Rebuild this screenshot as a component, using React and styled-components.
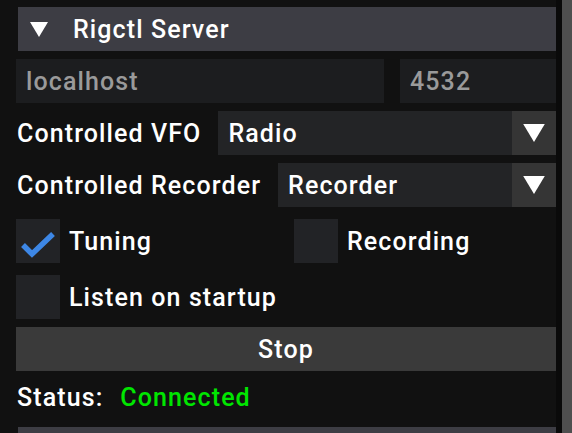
import React from 'react';
import styled, { createGlobalStyle } from 'styled-components';

const GlobalStyle = createGlobalStyle`
  html, body {
    margin: 0;
    padding: 0;
    background: #111111;
    overflow: hidden;
  }
  body {
    font-family: Roboto, "Liberation Sans", sans-serif;
    font-size: 25px;
    font-weight: 500;
    letter-spacing: 1.1px;
    color: #ffffff;
  }
`;

const Window = styled.div`
  display: flex;
  width: 572px;
  height: 433px;
  overflow: hidden;
`;

const Panel = styled.div`
  flex: 1;
  display: flex;
  flex-direction: column;
  gap: 8px;
  padding: 7px 0 0 16px;
  min-width: 0;

  & > * {
    flex-shrink: 0;
  }
`;

const Gutter = styled.div`
  width: 6px;
  background: #0a0a0a;
`;

const Scrollbar = styled.div`
  width: 10px;
  background: #4f4f4f;
`;

const Header = styled.div`
  display: flex;
  align-items: center;
  height: 44px;
  margin-left: 2px;
  padding-left: 12px;
  gap: 25px;
  background: #3d3d44;
`;

const Frame = styled.div`
  display: flex;
  align-items: center;
  height: 44px;
  padding-left: 10px;
  background: #1c1d1f;
  color: ${({ $muted }) => ($muted ? '#9a9a9a' : '#ffffff')};
  white-space: nowrap;
`;

const InputRow = styled.div`
  display: grid;
  grid-template-columns: 1fr 156px;
  gap: 16px;
`;

const FieldRow = styled.div`
  display: flex;
  align-items: center;
  gap: 17px;
`;

const Label = styled.span`
  padding-left: 1px;
  white-space: nowrap;
`;

const Combo = styled.div`
  flex: 1;
  display: flex;
  height: 44px;
  background: #232426;
`;

const ComboValue = styled.div`
  flex: 1;
  display: flex;
  align-items: center;
  padding-left: 10px;
`;

const ArrowButton = styled.div`
  width: 44px;
  display: flex;
  align-items: center;
  justify-content: center;
  background: #353535;
`;

const CheckRow = styled.div`
  display: grid;
  grid-template-columns: 278px 1fr;
  margin-top: ${({ $top }) => $top || 0}px;
`;

const CheckItem = styled.div`
  display: flex;
  align-items: center;
  gap: 9px;
`;

const Box = styled.div`
  width: 44px;
  height: 44px;
  background: #222326;
  display: flex;
  align-items: center;
  justify-content: center;
`;

const Button = styled.div`
  height: 44px;
  display: flex;
  align-items: center;
  justify-content: center;
  background: #3a3a3a;
`;

const StatusLine = styled.div`
  display: flex;
  align-items: center;
  height: 36px;
  padding-left: 1px;
  gap: 17px;
`;

const Connected = styled.span`
  color: #00e600;
`;

const NextHeader = styled.div`
  height: 10px;
  margin-left: 2px;
  margin-top: 4px;
  background: #3d3d44;
`;

const Arrow = ({ w = 18, h = 15 }) => (
  <svg width={w} height={h} viewBox="0 0 18 15">
    <polygon points="0,0 18,0 9,15" fill="#ffffff" />
  </svg>
);

const Check = () => (
  <svg width="44" height="44" viewBox="0 0 44 44">
    <polyline points="7,26 16,35 37,15" fill="none" stroke="#3d87e6" strokeWidth="5.5" />
  </svg>
);

export default function App() {
  return (
    <>
      <GlobalStyle />
      <Window>
        <Panel>
          <Header>
            <Arrow />
            <span>Rigctl Server</span>
          </Header>
          <InputRow>
            <Frame $muted>localhost</Frame>
            <Frame $muted>4532</Frame>
          </InputRow>
          <FieldRow>
            <Label>Controlled VFO</Label>
            <Combo>
              <ComboValue>Radio</ComboValue>
              <ArrowButton><Arrow w={22} h={18} /></ArrowButton>
            </Combo>
          </FieldRow>
          <FieldRow>
            <Label>Controlled Recorder</Label>
            <Combo>
              <ComboValue>Recorder</ComboValue>
              <ArrowButton><Arrow w={22} h={18} /></ArrowButton>
            </Combo>
          </FieldRow>
          <CheckRow $top={4}>
            <CheckItem>
              <Box><Check /></Box>
              <span>Tuning</span>
            </CheckItem>
            <CheckItem>
              <Box />
              <span>Recording</span>
            </CheckItem>
          </CheckRow>
          <CheckRow $top={4}>
            <CheckItem>
              <Box />
              <span>Listen on startup</span>
            </CheckItem>
          </CheckRow>
          <Button>Stop</Button>
          <StatusLine>
            <span>Status:</span>
            <Connected>Connected</Connected>
          </StatusLine>
          <NextHeader />
        </Panel>
        <Gutter />
        <Scrollbar />
      </Window>
    </>
  );
}
